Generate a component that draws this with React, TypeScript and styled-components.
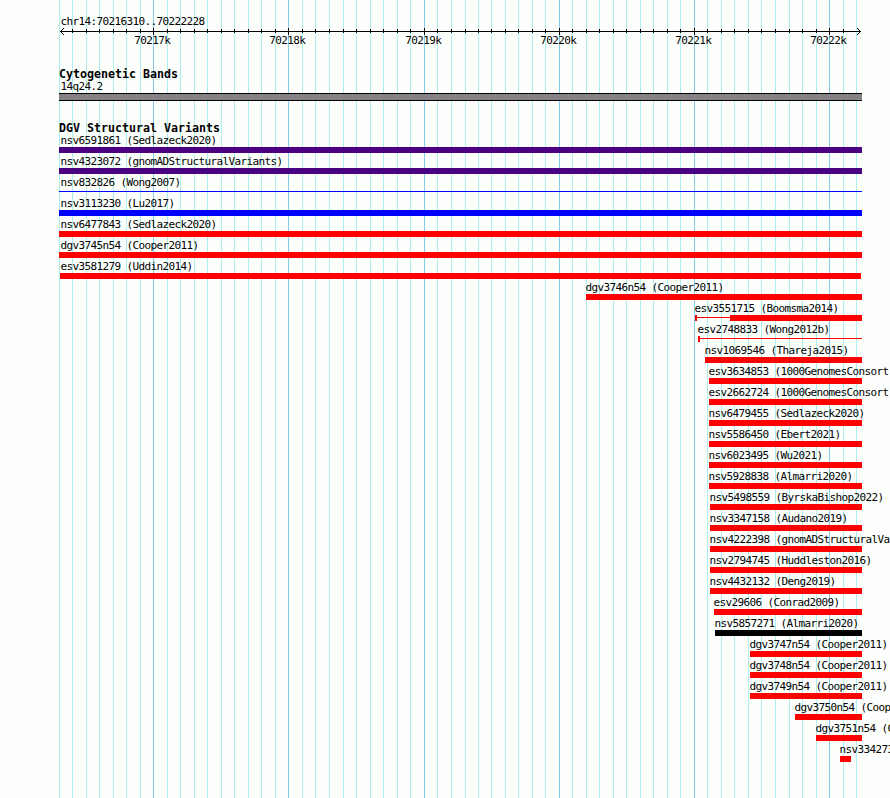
import styled, { createGlobalStyle } from 'styled-components';

const VIEW_WIDTH = 890;
const VIEW_HEIGHT = 798;
const TRACK_START = 59;
const TRACK_END = 862;
const FIRST_MAJOR = 7;

const GRID = [
  59, 72, 86, 99, 113, 126, 140, 153, 167, 180, 194, 207, 221, 234, 248, 261, 275, 288,
  302, 315, 329, 343, 356, 370, 383, 397, 410, 424, 437, 451, 465, 478, 491, 505, 518,
  532, 545, 559, 572, 586, 599, 613, 626, 640, 653, 667, 680, 694, 707, 721, 734, 748,
  761, 775, 789, 802, 816, 829, 843, 856,
];

const isMajor = (index: number) => index % 10 === FIRST_MAJOR;

type Shape = 'box' | 'line';

interface Segment {
  start: number;
  end: number;
  shape?: Shape;
}

interface Variant {
  name: string;
  color: string;
  segments: Segment[];
}

const gain = 'blue';
const loss = 'red';
const complex = '#4b0082';

const bar = (name: string, start: number, color = loss, end = TRACK_END): Variant => ({
  name,
  color,
  segments: [{ start, end }],
});

const variants: Variant[] = [
  bar('nsv6591861 (Sedlazeck2020)', 59, complex),
  bar('nsv4323072 (gnomADStructuralVariants)', 59, complex),
  {
    name: 'nsv832826 (Wong2007)',
    color: gain,
    segments: [{ start: 59, end: TRACK_END, shape: 'line' }],
  },
  bar('nsv3113230 (Lu2017)', 59, gain),
  bar('nsv6477843 (Sedlazeck2020)', 59),
  bar('dgv3745n54 (Cooper2011)', 59),
  bar('esv3581279 (Uddin2014)', 60, loss, 861),
  bar('dgv3746n54 (Cooper2011)', 586),
  {
    name: 'esv3551715 (Boomsma2014)',
    color: loss,
    segments: [
      { start: 695, end: 697 },
      { start: 697, end: 730, shape: 'line' },
      { start: 730, end: TRACK_END },
    ],
  },
  {
    name: 'esv2748833 (Wong2012b)',
    color: loss,
    segments: [
      { start: 698, end: 700 },
      { start: 700, end: TRACK_END, shape: 'line' },
    ],
  },
  bar('nsv1069546 (Thareja2015)', 705),
  bar('esv3634853 (1000GenomesConsort', 709),
  bar('esv2662724 (1000GenomesConsort', 709),
  bar('nsv6479455 (Sedlazeck2020)', 709),
  bar('nsv5586450 (Ebert2021)', 709),
  bar('nsv6023495 (Wu2021)', 709),
  bar('nsv5928838 (Almarri2020)', 709),
  bar('nsv5498559 (ByrskaBishop2022)', 710),
  bar('nsv3347158 (Audano2019)', 710),
  bar('nsv4222398 (gnomADStructuralVa', 710),
  bar('nsv2794745 (Huddleston2016)', 710),
  bar('nsv4432132 (Deng2019)', 710),
  bar('esv29606 (Conrad2009)', 714),
  bar('nsv5857271 (Almarri2020)', 715, 'black'),
  bar('dgv3747n54 (Cooper2011)', 750),
  bar('dgv3748n54 (Cooper2011)', 750),
  bar('dgv3749n54 (Cooper2011)', 750),
  bar('dgv3750n54 (Coop', 795),
  bar('dgv3751n54 (C', 816),
  bar('nsv334273', 840, loss, 851),
];

const GlobalStyle = createGlobalStyle`
  body {
    margin: 0;
    overflow: hidden;
    background: #fdfffc;
  }
`;

const Browser = styled.main`
  position: relative;
  display: flex;
  flex-direction: column;
  width: ${VIEW_WIDTH}px;
  height: ${VIEW_HEIGHT}px;
  overflow: hidden;
  color: #000;
  font-family: 'DejaVu Sans Mono', monospace;
  font-size: 11px;
  letter-spacing: -0.622px;
  font-variant-ligatures: none;
`;

const GridLines = styled.svg`
  position: absolute;
  inset: 0;
`;

const Ruler = styled.svg`
  position: relative;
  display: block;
  flex: none;
`;

const Track = styled.section<{ $gap?: number }>`
  position: relative;
  display: flex;
  flex-direction: column;
  margin-bottom: ${props => props.$gap ?? 0}px;
`;

const TrackTitle = styled.h2`
  margin: 0;
  padding-left: ${TRACK_START}px;
  height: 13px;
  line-height: 13px;
  font-size: 11.63px;
  font-weight: bold;
  letter-spacing: 0;
  white-space: pre;
`;

const Label = styled.div<{ $x: number }>`
  height: 12px;
  line-height: 12px;
  padding-left: ${props => props.$x}px;
  white-space: pre;
`;

const Band = styled.div`
  box-sizing: border-box;
  width: ${TRACK_END - TRACK_START}px;
  height: 8px;
  margin-left: ${TRACK_START}px;
  background: #858185;
  border: solid #000;
  border-width: 1px 0;
`;

const Row = styled.div`
  height: 21px;
`;

const Glyph = styled.div<{ $x: number }>`
  display: flex;
  height: 6px;
  padding-left: ${props => props.$x}px;
`;

const GlyphPart = styled.div<{ $width: number; $color: string; $shape: Shape }>`
  flex: none;
  width: ${props => props.$width}px;
  height: ${props => (props.$shape === 'line' ? 1 : 6)}px;
  margin-top: ${props => (props.$shape === 'line' ? 2 : 0)}px;
  background: ${props => props.$color};
`;

const Grid = () => (
  <GridLines width={VIEW_WIDTH} height={VIEW_HEIGHT} shapeRendering="crispEdges">
    {GRID.map((x, i) => (
      <rect key={x} x={x} y={0} width={1} height={VIEW_HEIGHT} fill={isMajor(i) ? '#87ceeb' : '#afeeee'} />
    ))}
  </GridLines>
);

const Scale = () => (
  <Ruler width={VIEW_WIDTH} height={68}>
    <text x={60.4} y={25}>chr14:70216310..70222228</text>
    <g shapeRendering="crispEdges">
      <rect x={60} y={31} width={801} height={1} />
      {GRID.slice(1, -1).map((x, i) =>
        isMajor(i + 1) ? (
          <rect key={x} x={x} y={28} width={1} height={7} />
        ) : (
          <rect key={x} x={x} y={29} width={1} height={4} />
        )
      )}
    </g>
    <path d="M64 28 60.5 31.5 64 35M857 28 860.5 31.5 857 35" fill="none" stroke="#000" />
    {GRID.filter((_, i) => isMajor(i)).map((x, i) => (
      <text key={x} x={x - 18.8} y={44}>{`${70217 + i}k`}</text>
    ))}
  </Ruler>
);

const VariantRow = ({ variant }: { variant: Variant }) => {
  const { start } = variant.segments[0];

  return (
    <Row>
      <Label $x={Math.max(start - 0.5, 60.4)}>{variant.name}</Label>
      <Glyph $x={start}>
        {variant.segments.map(segment => (
          <GlyphPart
            key={segment.start}
            $width={segment.end - segment.start}
            $color={variant.color}
            $shape={segment.shape ?? 'box'}
          />
        ))}
      </Glyph>
    </Row>
  );
};

export default function App() {
  return (
    <>
      <GlobalStyle />
      <Browser>
        <Grid />
        <Scale />
        <Track $gap={21}>
          <TrackTitle>Cytogenetic Bands</TrackTitle>
          <Label $x={60.4}>14q24.2</Label>
          <Band />
        </Track>
        <Track>
          <TrackTitle>DGV Structural Variants</TrackTitle>
          {variants.map(variant => (
            <VariantRow key={variant.name} variant={variant} />
          ))}
        </Track>
      </Browser>
    </>
  );
}
